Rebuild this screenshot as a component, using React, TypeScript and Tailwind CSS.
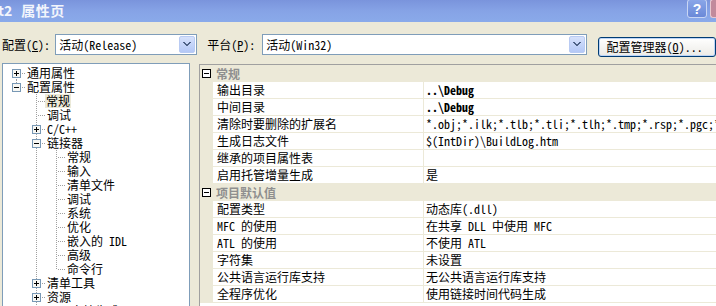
import React from 'react';

type Cell = 'none' | 'vline' | 'tee' | 'ell' | 'top';
type TreeRow = { label: string; cells: Cell[]; box?: 'plus' | 'minus'; selected?: boolean };

const treeRows: TreeRow[] = [
  { label: '通用属性', cells: ['top'], box: 'plus' },
  { label: '配置属性', cells: ['ell'], box: 'minus' },
  { label: '常规', cells: ['none', 'tee'], selected: true },
  { label: '调试', cells: ['none', 'tee'] },
  { label: 'C/C++', cells: ['none', 'tee'], box: 'plus' },
  { label: '链接器', cells: ['none', 'tee'], box: 'minus' },
  { label: '常规', cells: ['none', 'vline', 'tee'] },
  { label: '输入', cells: ['none', 'vline', 'tee'] },
  { label: '清单文件', cells: ['none', 'vline', 'tee'] },
  { label: '调试', cells: ['none', 'vline', 'tee'] },
  { label: '系统', cells: ['none', 'vline', 'tee'] },
  { label: '优化', cells: ['none', 'vline', 'tee'] },
  { label: '嵌入的 IDL', cells: ['none', 'vline', 'tee'] },
  { label: '高级', cells: ['none', 'vline', 'tee'] },
  { label: '命令行', cells: ['none', 'vline', 'ell'] },
  { label: '清单工具', cells: ['none', 'tee'], box: 'plus' },
  { label: '资源', cells: ['none', 'tee'], box: 'plus' },
  { label: 'XML 文档生成器', cells: ['none', 'tee'], box: 'plus' },
];

type PropRow = { cat?: boolean; name: string; value?: string; bold?: boolean };

const props: PropRow[] = [
  { cat: true, name: '常规' },
  { name: '输出目录', value: '..\\Debug', bold: true },
  { name: '中间目录', value: '..\\Debug', bold: true },
  { name: '清除时要删除的扩展名', value: '*.obj;*.ilk;*.tlb;*.tli;*.tlh;*.tmp;*.rsp;*.pgc;*.pgd' },
  { name: '生成日志文件', value: '$(IntDir)\\BuildLog.htm' },
  { name: '继承的项目属性表', value: '' },
  { name: '启用托管增量生成', value: '是' },
  { cat: true, name: '项目默认值' },
  { name: '配置类型', value: '动态库(.dll)' },
  { name: 'MFC 的使用', value: '在共享 DLL 中使用 MFC' },
  { name: 'ATL 的使用', value: '不使用 ATL' },
  { name: '字符集', value: '未设置' },
  { name: '公共语言运行库支持', value: '无公共语言运行库支持' },
  { name: '全程序优化', value: '使用链接时间代码生成' },
];

const DOT = '#A0A0A0';

function Gutter({ cells, box }: { cells: Cell[]; box?: 'plus' | 'minus' }) {
  const w = cells.length * 20;
  const last = cells.length - 1;
  return (
    <svg width={w} height={14} shapeRendering="crispEdges" className="shrink-0">
      {cells.map((c, i) => {
        const cx = i * 20 + 10 + 0.5;
        const parts: React.ReactNode[] = [];
        if (c === 'vline' || c === 'tee')
          parts.push(<line key="v" x1={cx} y1={0} x2={cx} y2={14} stroke={DOT} strokeDasharray="1 1" />);
        if (c === 'ell') parts.push(<line key="v" x1={cx} y1={0} x2={cx} y2={7} stroke={DOT} strokeDasharray="1 1" />);
        if (c === 'top') parts.push(<line key="v" x1={cx} y1={7} x2={cx} y2={14} stroke={DOT} strokeDasharray="1 1" />);
        if (i === last && c !== 'none')
          parts.push(<line key="h" x1={cx + 1} y1={7.5} x2={i * 20 + 20} y2={7.5} stroke={DOT} strokeDasharray="1 1" />);
        return <g key={i}>{parts}</g>;
      })}
      {box && (
        <g>
          <rect x={last * 20 + 6.5} y={3.5} width={8} height={8} fill="#F7F7F3" stroke="#7898B5" />
          <line x1={last * 20 + 8} y1={7.5} x2={last * 20 + 13} y2={7.5} stroke="#000" />
          {box === 'plus' && <line x1={last * 20 + 10.5} y1={5} x2={last * 20 + 10.5} y2={10} stroke="#000" />}
        </g>
      )}
    </svg>
  );
}

function DropButton() {
  return (
    <div className="w-[16px] h-[17px] mr-[1px] rounded-[2px] border border-[#B9CBF3] bg-gradient-to-b from-[#D6E1FB] to-[#B4C8F6] flex items-center justify-center">
      <svg width="8" height="5" viewBox="0 0 8 5" shapeRendering="crispEdges">
        <path d="M0 0h2v1h1v1h2v-1h1v-1h2v1h-1v1h-1v1h-1v1h-2v-1h-1v-1h-1v-1h-1z" fill="#4D6185" />
      </svg>
    </div>
  );
}

export default function App() {
  return (
    <div className="w-[716px] h-[306px] overflow-hidden bg-[#ECE9D8] text-black text-[12px] font-['Noto_Sans_Mono_CJK_SC','Noto_Sans_CJK_SC',sans-serif]">
      {/* title bar */}
      <div className="h-[22px] flex items-start justify-between bg-gradient-to-b from-[#7A94DC] via-[#86A3E6] to-[#8AAAEA] overflow-hidden">
        <div className="ml-[-2px] mt-[2px] text-[14px] leading-[17px] font-bold text-[#F2F5FC] whitespace-nowrap font-['Noto_Sans_CJK_SC',sans-serif]">
          t2<span className="ml-[9px] tracking-[0.5px]">属性页</span>
        </div>
        <div className="flex items-start">
          <div className="w-[20px] h-[19px] mt-[-1px] rounded-[3px] border border-[#C9D6F4] bg-gradient-to-b from-[#8AA6E8] to-[#6A89D8] flex items-center justify-center text-white font-bold text-[14px] leading-none font-['Liberation_Sans',sans-serif]">
            ?
          </div>
          <div className="w-[6px] h-[19px] mt-[-1px] ml-[3px] rounded-l-[3px] border border-r-0 border-[#E8C8D0] bg-[#C28A9C]" />
        </div>
      </div>

      {/* config row */}
      <div className="mt-[12px] h-[21px] flex items-start whitespace-nowrap">
        <div className="w-[56px] pl-[2px] leading-[21px]">
          配置(<span className="underline">C</span>):
        </div>
        <div className="w-[144px] h-[21px] border border-[#7F9DB9] bg-white flex items-center justify-between">
          <span className="pl-[3px] leading-[19px]">活动(Release)</span>
          <DropButton />
        </div>
        <div className="ml-[10px] w-[56px] leading-[21px]">
          平台(<span className="underline">P</span>):
        </div>
        <div className="w-[329px] h-[21px] border border-[#7F9DB9] bg-white flex items-center justify-between">
          <span className="pl-[3px] leading-[19px]">活动(Win32)</span>
          <DropButton />
        </div>
        <div className="ml-[11px] mt-[3px] w-[120px] h-[20px] rounded-[3px] border border-[#003C74] bg-gradient-to-b from-[#FFFFFF] to-[#ECEBE6] shadow-[inset_0_0_0_1px_#BCD4F6] pl-[8px] leading-[18px]">
          配置管理器(<span className="underline">O</span>)...
        </div>
      </div>

      {/* main area */}
      <div className="mt-[8px] flex items-start">
        <div className="ml-[2px] w-[188px] h-[260px] shrink-0 border border-[#7F9DB9] bg-white pt-[2px] pl-[3px] overflow-hidden">
          {treeRows.map((r, i) => (
            <div key={i} className="h-[14px] flex items-center whitespace-nowrap">
              <Gutter cells={r.cells} box={r.box} />
              <span className={r.selected ? 'ml-[-1px] px-[1px] bg-[#ECE9D8] leading-[14px]' : 'ml-[1px] leading-[14px]'}>
                {r.label}
              </span>
            </div>
          ))}
        </div>

        <div className="ml-[9px] mt-[1px] flex-1 min-w-0 h-[260px] border-l border-t border-[#A0A0A0] bg-white overflow-hidden">
          {props.map((p, i) =>
            p.cat ? (
              <div key={i} className="h-[17px] flex items-center bg-[#ECE9D8]">
                <div className="w-[13px] shrink-0 flex justify-center">
                  <svg width="9" height="9" shapeRendering="crispEdges">
                    <rect x="0.5" y="0.5" width="8" height="8" fill="white" stroke="#000" />
                    <line x1="2" y1="4.5" x2="7" y2="4.5" stroke="#000" />
                  </svg>
                </div>
                <span className="pl-[3px] font-bold text-[#8F8F8F] leading-[16px]">{p.name}</span>
              </div>
            ) : (
              <div key={i} className="h-[17px] flex border-b border-[#ECE9D8] whitespace-nowrap">
                <div className="w-[13px] shrink-0 bg-[#ECE9D8]" />
                <div className="w-[211px] shrink-0 border-r border-[#ECE9D8] pl-[4px] leading-[16px]">{p.name}</div>
                <div className={'flex-1 min-w-0 overflow-hidden pl-[2px] leading-[16px] ' + (p.bold ? 'font-bold' : '')}>
                  {p.value}
                </div>
              </div>
            )
          )}
        </div>
      </div>
    </div>
  );
}
